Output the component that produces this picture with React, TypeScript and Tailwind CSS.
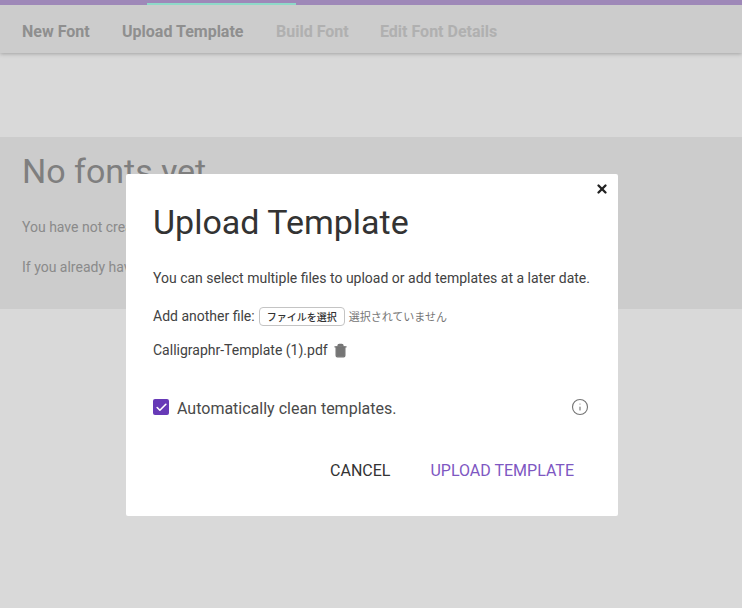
import { Check, Info, Trash2, X } from "lucide-react";

function Dialog() {
  return (
    <div className="relative w-[492px] h-[342px] bg-white rounded-[2px] pl-[27px] pr-[28px] pt-[25px] text-[#333]">
      <button className="absolute right-[9px] top-[8px] text-[#222]">
        <X size={14} strokeWidth={4} />
      </button>
      <h2 className="text-[34px] leading-[46px] text-[#333]">Upload Template</h2>
      <p className="mt-[23px] text-[14px] leading-[20px] whitespace-nowrap text-[#424242]">
        You can select multiple files to upload or add templates at a later date.
      </p>
      <div className="mt-[18px] flex items-center h-[20px] text-[14px] whitespace-nowrap text-[#424242]">
        <span>Add another file:</span>
        <span className="ml-[4px] h-[19px] w-[86px] flex items-center justify-center rounded-[4px] border border-[#c4c4c4] text-[10px] font-medium text-[#333] font-['Noto_Sans_CJK_JP',sans-serif]">
          ファイルを選択
        </span>
        <span className="ml-[4px] text-[11px] text-[#757575] font-['Noto_Sans_CJK_JP',sans-serif]">選択されていません</span>
      </div>
      <div className="mt-[14px] flex items-center h-[20px] text-[14px] whitespace-nowrap text-[#424242]">
        <span>Calligraphr-Template (1).pdf</span>
        <Trash2 size={15} className="ml-[5px] text-[#757575] fill-[#757575]" />
      </div>
      <div className="mt-[37px] flex items-center h-[20px]">
        <span className="w-[16px] h-[16px] rounded-[2px] bg-[#673ab7] flex items-center justify-center text-white">
          <Check size={13} strokeWidth={3} />
        </span>
        <span className="ml-[8px] mt-[3px] text-[16px] text-[#4a4a4a] whitespace-nowrap">Automatically clean templates.</span>
        <Info size={18} strokeWidth={1.5} className="ml-auto mr-[1px] text-[#757575]" />
      </div>
      <div className="mt-[44px] flex justify-end items-center text-[16px] leading-[20px] pr-[16px]">
        <span className="text-[#333]">CANCEL</span>
        <span className="ml-[40px] text-[#7e57c2]">UPLOAD TEMPLATE</span>
      </div>
    </div>
  );
}

export default function App() {
  return (
    <div className="relative h-[608px] w-full overflow-hidden bg-white font-['Roboto',sans-serif]">
      <div className="h-[53px] bg-[#f0f0f0] shadow-[0_1px_4px_rgba(0,0,0,0.25)] relative">
        <div className="h-[5px] bg-[#baa0d9] flex pl-[147px]">
          <div className="mt-[3px] h-[2px] w-[149px] bg-[#a7ffeb]" />
        </div>
        <div className="flex h-[48px] items-center pl-[22px] pt-[6px] text-[16px] font-bold whitespace-nowrap">
          <span className="w-[100px] text-[#a8a8a8]">New Font</span>
          <span className="w-[154px] text-[#a8a8a8]">Upload Template</span>
          <span className="w-[104px] text-[#cfcfcf]">Build Font</span>
          <span className="text-[#cfcfcf]">Edit Font Details</span>
        </div>
      </div>
      <div className="mt-[84px] h-[172px] bg-[#f0f0f0] px-[22px] pt-[12px] whitespace-nowrap">
        <h1 className="text-[34px] leading-[44px] text-[#969696]">No fonts yet</h1>
        <p className="mt-[24px] text-[14px] leading-[20px] text-[#a3a3a3]">You have not created any fonts yet. Upload a template to make a font out of it.</p>
        <p className="mt-[20px] text-[14px] leading-[20px] text-[#a3a3a3]">If you already have a filled template, upload it to build your font from it.</p>
      </div>
      <div className="absolute inset-0 bg-black/15 flex justify-center pt-[174px] pl-[2px]">
        <Dialog />
      </div>
    </div>
  );
}
